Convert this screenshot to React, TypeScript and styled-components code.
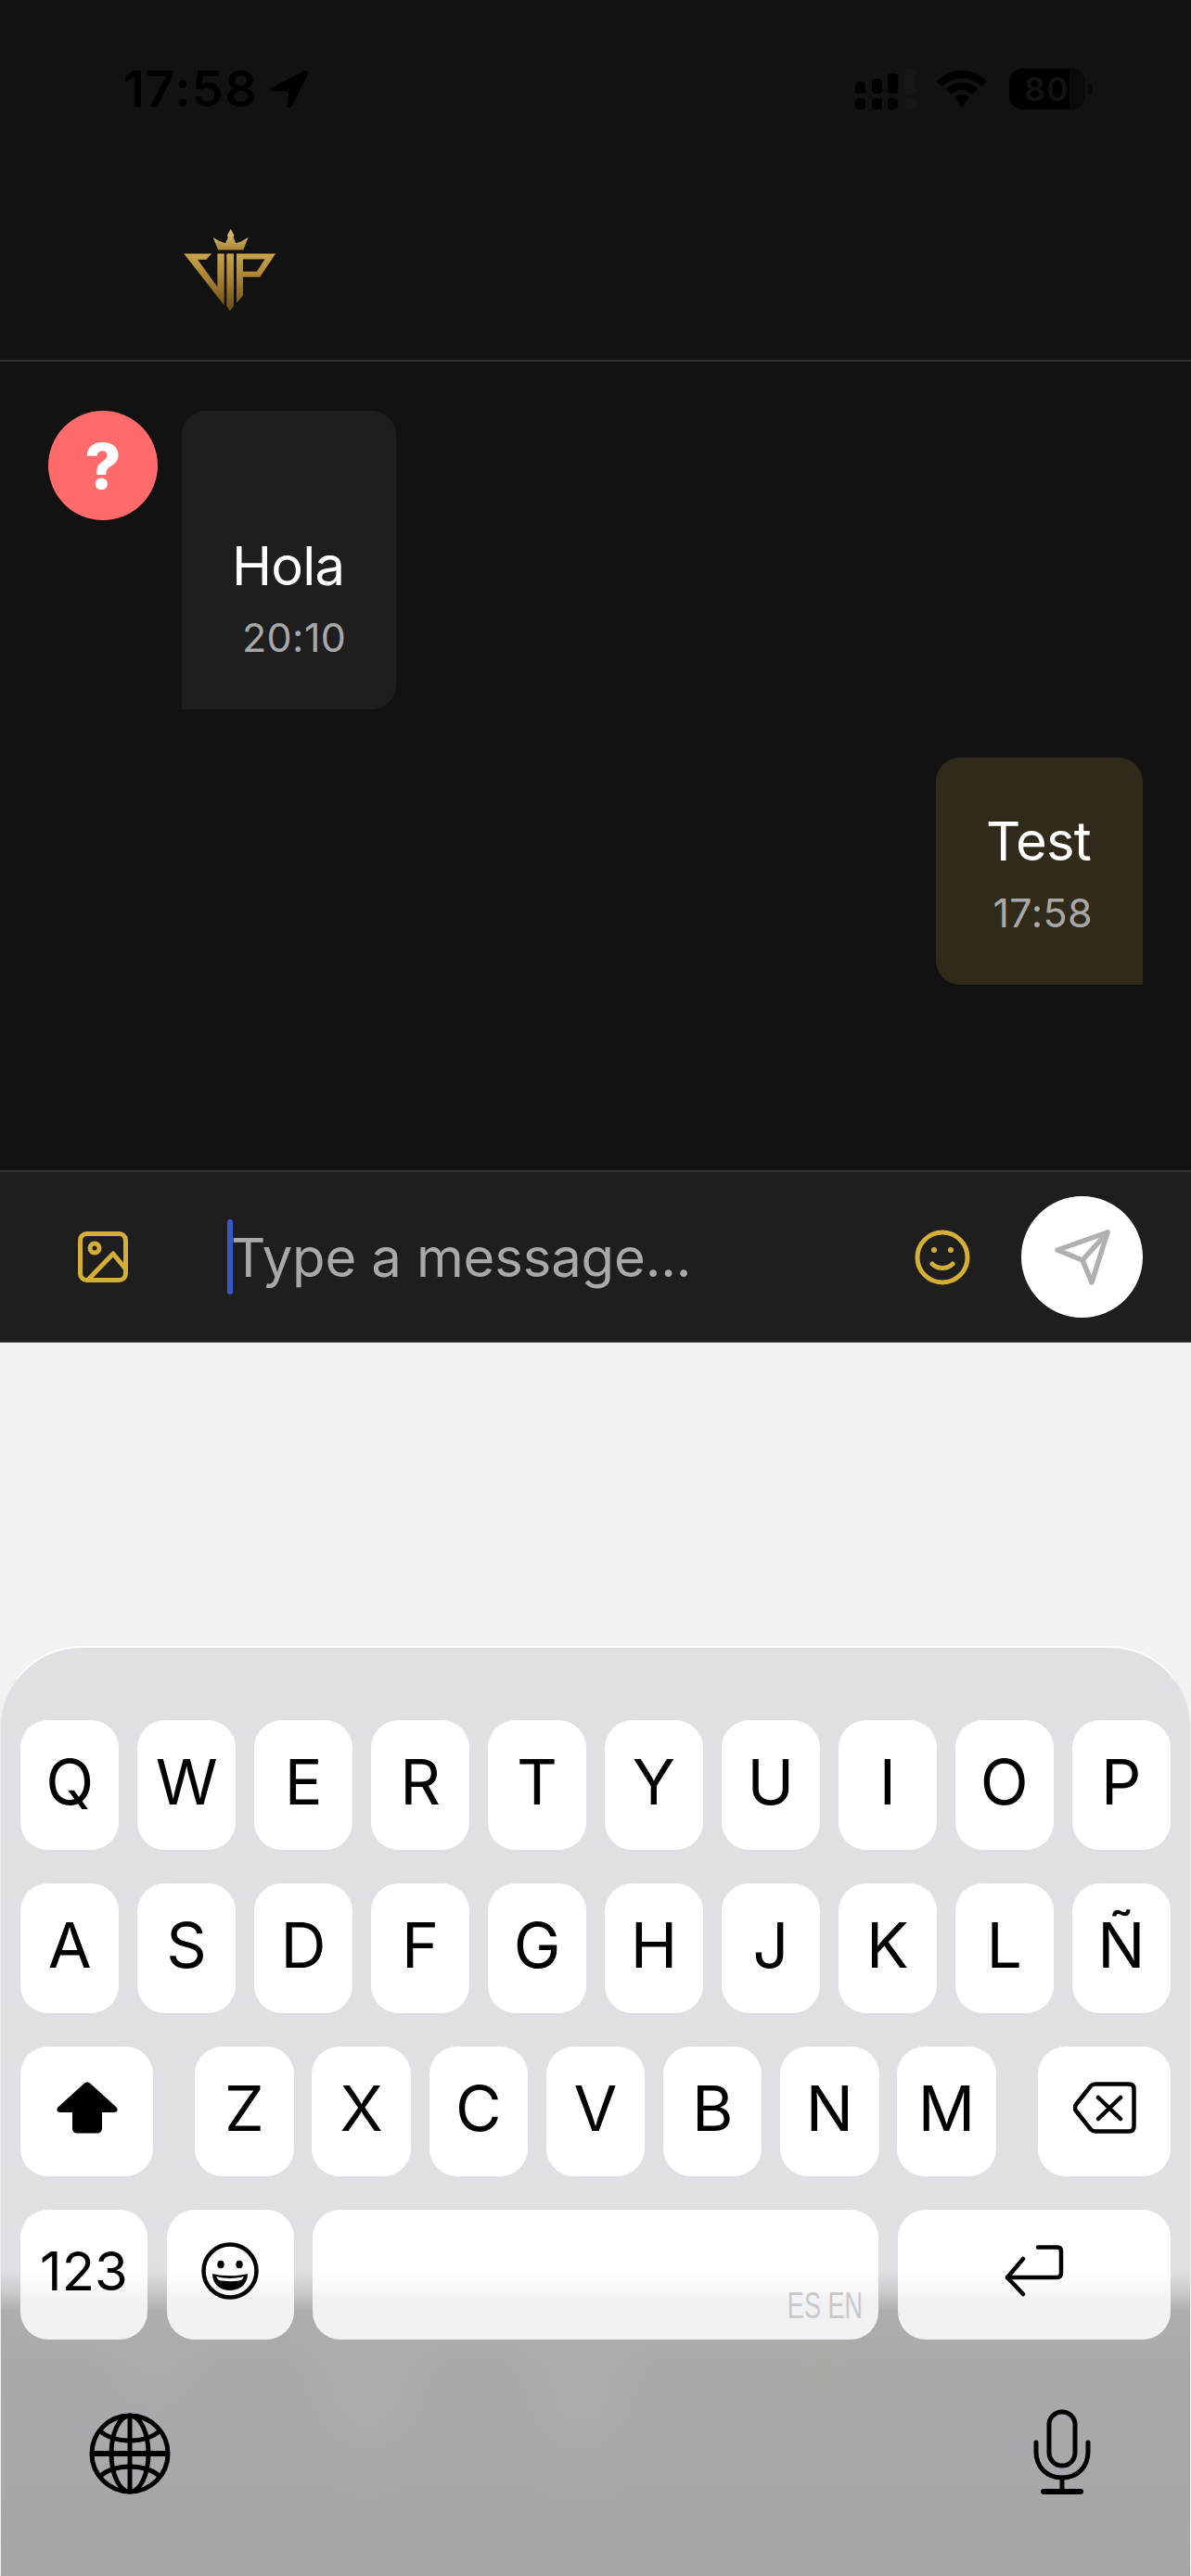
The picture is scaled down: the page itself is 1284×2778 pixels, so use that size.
import React from "react";
import styled, { createGlobalStyle } from "styled-components";

const Global = createGlobalStyle`
  html, body { margin: 0; padding: 0; background: #f2f2f2; }
  * { box-sizing: border-box; }
`;

const Page = styled.div`
  width: 1284px;
  height: 2778px;
  overflow: hidden;
  display: flex;
  flex-direction: column;
  font-family: Inter, "Liberation Sans", sans-serif;
  background: #f2f2f2;
`;

const Header = styled.header`
  height: 390px;
  background: #121212;
  border-bottom: 2px solid #333;
  padding-top: 73px;
  flex: none;
`;

const StatusBar = styled.div`
  height: 46px;
  display: flex;
  align-items: center;
  justify-content: space-between;
  padding: 0 107px 0 133px;
`;

const StatusLeft = styled.div`
  display: flex;
  align-items: center;
  gap: 13px;
`;

const Clock = styled.span`
  font-size: 54px;
  font-weight: 600;
  line-height: 46px;
  color: #000;
  letter-spacing: 1.5px;
`;

const StatusRight = styled.div`
  display: flex;
  align-items: center;
  gap: 24px;
`;

const Battery = styled.div`
  display: flex;
  align-items: center;
  gap: 3px;
`;

const BatteryBody = styled.div`
  width: 82px;
  height: 44px;
  border-radius: 14px;
  background: linear-gradient(90deg, #000 0, #000 65px, #0a0a0a 65px);
  color: #121212;
  font-size: 36px;
  font-weight: 600;
  line-height: 44px;
  padding-left: 16px;
  letter-spacing: 1px;
`;

const BatteryNub = styled.div`
  width: 4px;
  height: 12px;
  border-radius: 0 4px 4px 0;
  background: #0a0a0a;
`;

const LogoRow = styled.div`
  padding: 128px 0 0 198px;
  display: flex;
`;

const Messages = styled.main`
  height: 872px;
  flex: none;
  background: #121212;
  padding: 53px 52px 0;
  display: flex;
  flex-direction: column;
  gap: 52px;
`;

const IncomingRow = styled.div`
  display: flex;
  align-items: flex-start;
  gap: 26px;
`;

const OutgoingRow = styled.div`
  display: flex;
  justify-content: flex-end;
`;

const Avatar = styled.div`
  width: 118px;
  height: 118px;
  border-radius: 50%;
  background: #ff6b6b;
  color: #fff;
  font-size: 68px;
  font-weight: 800;
  display: flex;
  align-items: center;
  justify-content: center;
`;

const Bubble = styled.div<{ $mine?: boolean }>`
  display: flex;
  flex-direction: column;
  align-items: flex-end;
  padding: ${(p) => (p.$mine ? "54px" : "131px")} 56px 51px 54px;
  background: ${(p) => (p.$mine ? "#2f2a1a" : "#1e1e1e")};
  border-radius: ${(p) => (p.$mine ? "26px 26px 0 26px" : "26px 26px 26px 0")};
`;

const BubbleText = styled.div`
  font-size: 58px;
  line-height: 72px;
  letter-spacing: -0.8px;
  color: #fff;
  align-self: flex-start;
`;

const BubbleTime = styled.div`
  margin: 15px -2px 1px 0;
  font-size: 43px;
  line-height: 52px;
  letter-spacing: 0.4px;
  color: #a8a8a8;
`;

const Composer = styled.div`
  height: 186px;
  flex: none;
  background: #1e1e1e;
  border-top: 2px solid #333;
  border-bottom: 1px solid #555;
  padding: 0 52px 0 84px;
  display: flex;
  align-items: center;
`;

const InputArea = styled.div`
  flex: 1;
  margin-left: 107px;
  display: flex;
  align-items: center;
`;

const Caret = styled.div`
  width: 6px;
  height: 81px;
  border-radius: 3px;
  background: #3a57c4;
`;

const Placeholder = styled.span`
  font-size: 58px;
  color: #a9a9a9;
  margin-left: -2px;
  letter-spacing: -0.15px;
`;

const SendButton = styled.div`
  width: 131px;
  height: 131px;
  margin-left: 55px;
  border-radius: 50%;
  background: #fff;
  display: flex;
  align-items: center;
  justify-content: center;
`;

const Spacer = styled.div`
  height: 327px;
  flex: none;
`;

const Keyboard = styled.section`
  flex: 1;
  border-top: 2px solid #fff;
  border-left: 1px solid #eeeef0;
  border-right: 1px solid #eeeef0;
  border-radius: 88px 88px 0 0;
  padding-top: 78px;
  background:
    radial-gradient(ellipse 70px 100px at 884px 780px, rgba(176, 172, 145, 0.28), transparent),
    radial-gradient(ellipse 90px 130px at 395px 790px, rgba(178, 179, 183, 0.4), transparent),
    radial-gradient(ellipse 90px 130px at 625px 800px, rgba(178, 179, 183, 0.35), transparent),
    radial-gradient(ellipse 80px 110px at 165px 770px, rgba(178, 179, 183, 0.25), transparent),
    linear-gradient(180deg, #dfe0e4 0, #dfe0e4 672px, #c9cacd 695px, #acadb0 716px, #a8a9ac 780px, #a5a6a9 1003px);
`;

const KeyRows = styled.div`
  display: flex;
  flex-direction: column;
  gap: 36px;
  padding: 0 21px;
`;

const KeyRow = styled.div`
  display: flex;
  gap: 19.6px;
`;

const BottomKeyRow = styled(KeyRow)`
  gap: 20.6px;
`;

const SplitRow = styled.div`
  display: flex;
  justify-content: space-between;
`;

const Key = styled.div<{ $w?: number; $fade?: boolean }>`
  ${(p) => (p.$w ? `width: ${p.$w}px; flex: none;` : "flex: 1;")}
  height: 140px;
  border-radius: 30px;
  background: ${(p) =>
    p.$fade ? "linear-gradient(180deg, #fff 0, #fff 68px, #f0f1f3 100px, #f1f2f3 140px)" : "#fff"};
  color: #000;
  font-size: 68px;
  line-height: 1;
  padding-bottom: 8px;
  display: flex;
  align-items: center;
  justify-content: center;
`;

const NumberKey = styled(Key)`
  font-size: 58px;
`;

const SpaceKey = styled(Key)`
  align-items: flex-end;
  justify-content: flex-end;
  padding: 0 17px 16px 0;
`;

const LangLabel = styled.span`
  display: inline-block;
  font-family: "Liberation Sans", sans-serif;
  font-size: 41px;
  line-height: 1;
  color: #c9c9c9;
  white-space: nowrap;
  transform: scaleX(0.66);
  transform-origin: right center;
`;

const BottomBar = styled.div`
  display: flex;
  justify-content: space-between;
  align-items: flex-end;
  padding: 75px 107px 0 95px;
`;

const GOLD = "#d4af37";

const Logo = () => (
  <svg width="99" height="88" viewBox="143 80 297 265">
    <defs>
      <linearGradient id="lg" x1="0" y1="80" x2="0" y2="345" gradientUnits="userSpaceOnUse">
        <stop offset="0" stopColor="#e6cb7c" />
        <stop offset="0.26" stopColor="#a98238" />
        <stop offset="0.31" stopColor="#c9a24b" />
        <stop offset="0.65" stopColor="#a37c2f" />
        <stop offset="1" stopColor="#6b4c18" />
      </linearGradient>
    </defs>
    <g fill="url(#lg)">
      <path d="M295 80L306 100L304 108L312 126L330 120L352 107L336 148L254 148L238 107L260 120L278 126L286 108L284 100Z" />
      <path d="M143 160H234L215 179H188L252 268V160H274V328Z" />
      <path d="M282 160H305V330L293 346L282 330Z" />
      <path fillRule="evenodd" d="M314 160H441L390 236H335V296L314 320ZM335 178V218H380L406 178Z" />
    </g>
  </svg>
);

const LocationArrow = () => (
  <svg width="42" height="42" viewBox="0 0 42 42">
    <path d="M2 19.5L37 1.5C40 0.5 42 2.5 41 5L24 39C22.5 42.500 18.500 42.500 18.500 38L20 25.500C20 24 19 23 17.500 23L4 23.500C0 23.500 -1 21 2 19.500Z" fill="#000" />
  </svg>
);

const SignalIcon = () => (
  <svg width="64" height="44" viewBox="0 0 64 44">
    <g fill="#000">
      <rect x="0" y="14" width="11" height="13" rx="4" />
      <rect x="18" y="11" width="11" height="16" rx="4" />
      <rect x="35" y="5" width="11" height="22" rx="4" />
      <rect x="0" y="32" width="11" height="12" rx="4" />
      <rect x="18" y="32" width="11" height="12" rx="4" />
      <rect x="35" y="32" width="11" height="12" rx="4" />
    </g>
    <g fill="#171717">
      <rect x="53" y="0" width="11" height="27" rx="4" />
      <rect x="53" y="32" width="11" height="12" rx="4" />
    </g>
  </svg>
);

const WifiIcon = () => (
  <svg width="54" height="40" viewBox="0 0 54 40">
    <path d="M27 0C38 0 47 4.500 54 12L48.500 17.500C43 12 36 8.500 27 8.500C18 8.500 11 12 5.500 17.500L0 12C7 4.500 16 0 27 0Z" fill="#000" />
    <path d="M27 13C34 13 40 16 44 20L38.500 26C35.500 23 32 21 27 21C22 21 18.500 23 15.500 26L10 20C14 16 20 13 27 13Z" fill="#000" />
    <path d="M27 26C30 26 32.500 27 34.500 29L27 40L19.500 29C21.500 27 24 26 27 26Z" fill="#000" />
  </svg>
);

const ImageIcon = () => (
  <svg width="54" height="55" viewBox="0 0 54 55" fill="none" stroke={GOLD} strokeWidth="5" strokeLinejoin="round" strokeLinecap="round">
    <rect x="2.500" y="2.500" width="49" height="50" rx="7" />
    <circle cx="18" cy="18" r="5" />
    <path d="M11 52L38 24L51 40" />
  </svg>
);

const SmileIcon = () => (
  <svg width="60" height="60" viewBox="0 0 60 60" fill="none" stroke={GOLD} strokeWidth="5" strokeLinecap="round">
    <circle cx="30" cy="30" r="27" />
    <path d="M19 37C25 43 35 43 41 37" />
    <circle cx="21" cy="22" r="1.500" fill={GOLD} strokeWidth="3" />
    <circle cx="39" cy="22" r="1.500" fill={GOLD} strokeWidth="3" />
  </svg>
);

const SendIcon = () => (
  <svg width="62" height="62" viewBox="0 0 62 62" fill="none" stroke="#b0b0b0" strokeWidth="5.500" strokeLinejoin="round" strokeLinecap="round">
    <path d="M58 4L4 23L31 34L41 58Z" />
    <path d="M58 4L31 34" />
  </svg>
);

const ShiftIcon = () => (
  <svg width="66" height="56" viewBox="0 0 66 56" fill="#000">
    <path d="M29.500 2L2 27C-1 30 0.500 33 4 33H17V50C17 53.500 19 55.500 22.500 55.500H43.500C47 55.500 49 53.500 49 50V33H62C65.500 33 67 30 64 27L36.500 2C34.500 0 31.500 0 29.500 2Z" />
  </svg>
);

const BackspaceIcon = () => (
  <svg width="68" height="56" viewBox="0 0 68 56" fill="none" stroke="#000" strokeWidth="4.500" strokeLinecap="round" strokeLinejoin="round">
    <path d="M24 2.500H60C63.500 2.500 65.500 4.500 65.500 8V48C65.500 51.500 63.500 53.500 60 53.500H24C22 53.500 20.500 53 19 51.500L3.500 32C1.500 29.500 1.500 26.500 3.500 24L19 4.500C20.500 3 22 2.500 24 2.500Z" />
    <path d="M27 17L51 40M51 17L27 40" />
  </svg>
);

const EmojiIcon = () => (
  <svg width="62" height="62" viewBox="0 0 62 62">
    <circle cx="31" cy="31" r="28.500" fill="none" stroke="#000" strokeWidth="4.500" />
    <ellipse cx="21" cy="24" rx="3.700" ry="4.300" fill="#000" />
    <ellipse cx="41" cy="24" rx="3.700" ry="4.300" fill="#000" />
    <path d="M12 34C23 37 39 37 50 34C50 46 41 52 31 52C21 52 12 46 12 34Z" fill="#000" />
    <path d="M16 37C25 39.500 37 39.500 46 37C45 39 44 40 43 41C36 42.500 26 42.500 19 41C18 40 17 39 16 37Z" fill="#fff" />
  </svg>
);

const ReturnIcon = () => (
  <svg width="64" height="56" viewBox="0 0 64 56" fill="none" stroke="#000" strokeWidth="4.500" strokeLinecap="round" strokeLinejoin="round">
    <path d="M36 2.500H57C60 2.500 61 4 61 7V30C61 33 60 35 57 35H3" />
    <path d="M20 15L3 35L20 53" />
  </svg>
);

const GlobeIcon = () => (
  <svg width="88" height="88" viewBox="0 0 88 88" fill="none" stroke="#000" strokeWidth="5">
    <circle cx="44" cy="44" r="41" />
    <ellipse cx="44" cy="44" rx="20" ry="41" />
    <path d="M44 3V85" />
    <path d="M3 44H85" strokeWidth="6" />
    <path d="M11 19C20 27 32 30 44 30C56 30 68 27 77 19" />
    <path d="M11 69C20 61 32 58 44 58C56 58 68 61 77 69" />
  </svg>
);

const MicIcon = () => (
  <svg width="62" height="92" viewBox="0 0 62 92" fill="none" stroke="#000" strokeWidth="5" strokeLinecap="round">
    <rect x="17" y="3" width="28" height="58" rx="14" />
    <path d="M3 36V46C3 62 14 74 31 74C48 74 59 62 59 46V36" />
    <path d="M31 74V88" />
    <path d="M11 89H51" strokeWidth="6" />
  </svg>
);

const row1 = ["Q", "W", "E", "R", "T", "Y", "U", "I", "O", "P"];
const row2 = ["A", "S", "D", "F", "G", "H", "J", "K", "L", "Ñ"];
const row3 = ["Z", "X", "C", "V", "B", "N", "M"];

export default function App() {
  return (
    <Page>
      <Global />
      <Header>
        <StatusBar>
          <StatusLeft>
            <Clock>17:58</Clock>
            <LocationArrow />
          </StatusLeft>
          <StatusRight>
            <SignalIcon />
            <WifiIcon />
            <Battery>
              <BatteryBody>80</BatteryBody>
              <BatteryNub />
            </Battery>
          </StatusRight>
        </StatusBar>
        <LogoRow>
          <Logo />
        </LogoRow>
      </Header>
      <Messages>
        <IncomingRow>
          <Avatar>?</Avatar>
          <Bubble>
            <BubbleText>Hola</BubbleText>
            <BubbleTime>20:10</BubbleTime>
          </Bubble>
        </IncomingRow>
        <OutgoingRow>
          <Bubble $mine>
            <BubbleText>Test</BubbleText>
            <BubbleTime>17:58</BubbleTime>
          </Bubble>
        </OutgoingRow>
      </Messages>
      <Composer>
        <ImageIcon />
        <InputArea>
          <Caret />
          <Placeholder>Type a message...</Placeholder>
        </InputArea>
        <SmileIcon />
        <SendButton>
          <SendIcon />
        </SendButton>
      </Composer>
      <Spacer />
      <Keyboard>
        <KeyRows>
          <KeyRow>
            {row1.map((k) => (
              <Key key={k}>{k}</Key>
            ))}
          </KeyRow>
          <KeyRow>
            {row2.map((k) => (
              <Key key={k}>{k}</Key>
            ))}
          </KeyRow>
          <SplitRow>
            <Key $w={143}>
              <ShiftIcon />
            </Key>
            <KeyRow>
              {row3.map((k) => (
                <Key key={k} $w={106.6}>
                  {k}
                </Key>
              ))}
            </KeyRow>
            <Key $w={143}>
              <BackspaceIcon />
            </Key>
          </SplitRow>
          <BottomKeyRow>
            <NumberKey $w={137} $fade>
              123
            </NumberKey>
            <Key $w={137} $fade>
              <EmojiIcon />
            </Key>
            <SpaceKey $fade>
              <LangLabel>ES EN</LangLabel>
            </SpaceKey>
            <Key $w={294} $fade>
              <ReturnIcon />
            </Key>
          </BottomKeyRow>
        </KeyRows>
        <BottomBar>
          <GlobeIcon />
          <MicIcon />
        </BottomBar>
      </Keyboard>
    </Page>
  );
}
